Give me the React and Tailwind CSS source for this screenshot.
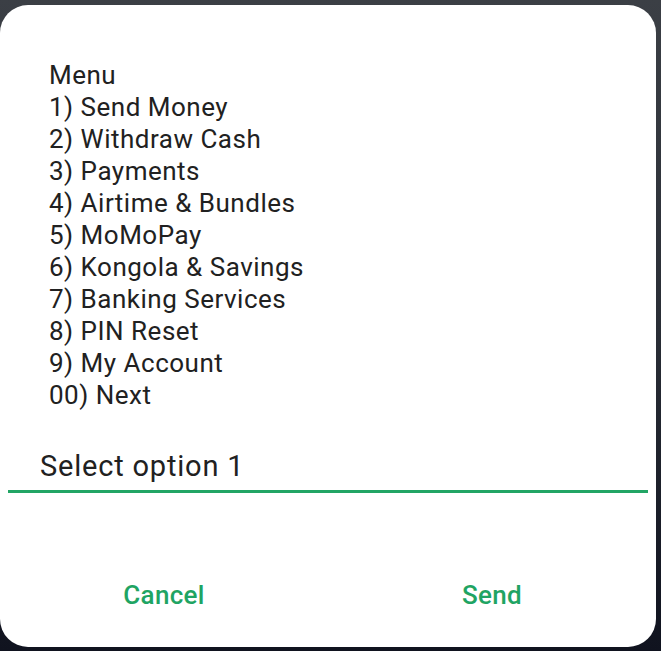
import React, { useState } from 'react';

const menuItems = [
  'Menu',
  '1) Send Money',
  '2) Withdraw Cash',
  '3) Payments',
  '4) Airtime & Bundles',
  '5) MoMoPay',
  '6) Kongola & Savings',
  '7) Banking Services',
  '8) PIN Reset',
  '9) My Account',
  '00) Next',
];

const App = () => {
  const [value, setValue] = useState('Select option 1');

  return (
    <div
      className="min-h-[651px] w-[661px] bg-gradient-to-b from-[#3b3f45] via-[#2a2e36] to-[#10131f] pt-[5px] pr-[5px] pb-[4px]"
      style={{ fontFamily: 'Roboto, "Noto Sans", sans-serif' }}
    >
      {/* USSD dialog */}
      <div className="flex h-[642px] w-[656px] flex-col rounded-[28px] bg-white">
        <div className="pt-[54px] pl-[49px] text-[26px] leading-[32px] tracking-[0.5px] text-[#212121]">
          {menuItems.map((item) => (
            <div key={item}>{item}</div>
          ))}
        </div>

        {/* Input */}
        <div className="mx-2 mt-[35px] border-b-[3px] border-[#22a565] pb-1">
          <input
            value={value}
            onChange={(e) => setValue(e.target.value)}
            className="h-10 w-full bg-transparent pl-8 text-[29px] leading-10 tracking-[0.8px] text-[#212121] outline-none"
          />
        </div>

        {/* Actions */}
        <div className="mt-[70px] grid grid-cols-2">
          <button className="h-16 text-[26px] font-medium tracking-[0.3px] text-[#1fa463]">Cancel</button>
          <button className="h-16 text-[26px] font-medium tracking-[0.3px] text-[#1fa463]">Send</button>
        </div>
      </div>
    </div>
  );
};

export default App;
